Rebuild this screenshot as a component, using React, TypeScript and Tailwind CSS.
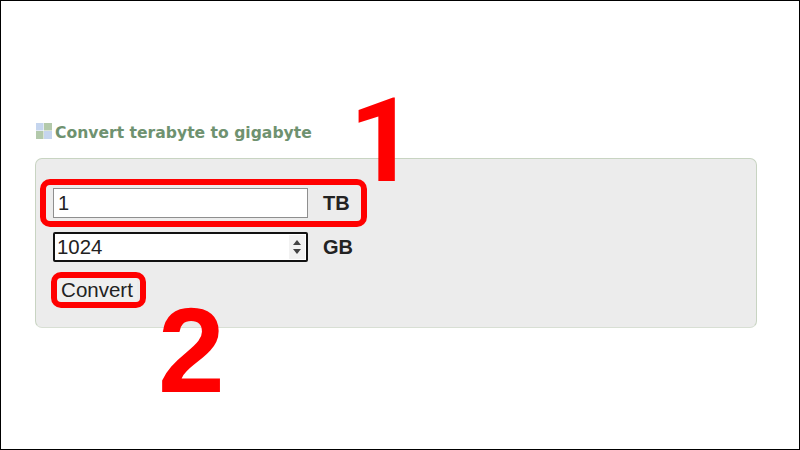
export default function App() {
  return (
    <div className="relative h-[450px] w-[800px] overflow-hidden border border-black bg-white font-['Liberation_Sans',sans-serif] text-[#222]">
      <div className="pl-[34px] pt-[121px] pr-[42px]">
        {/* Heading */}
        <div className="flex h-[20px] items-center gap-[3px]">
          <svg width="16" height="16" viewBox="0 0 16 16" className="mb-[2px] ml-[1px] shrink-0">
            <rect x="0" y="0" width="7.5" height="7.5" fill="#c5d5ee" />
            <rect x="8" y="0" width="8" height="7.5" fill="#b3c9ab" />
            <rect x="0" y="8" width="7.5" height="8" fill="#b3c9ab" />
            <rect x="8" y="8" width="8" height="8" fill="#c5d5ee" />
          </svg>
          <h1 className="mt-[4px] font-['DejaVu_Sans',sans-serif] text-[15.6px] font-bold whitespace-nowrap text-[#6f9270]">
            Convert terabyte to gigabyte
          </h1>
        </div>

        {/* Converter panel */}
        <div className="mt-[16px] h-[170px] rounded-[7px] border border-[#c8d4c2] border-b-[#d8dfd4] bg-[#ececec] pl-[17px] pt-[29px]">
          <div className="flex items-center">
            <input
              readOnly
              value="1"
              className="h-[30px] w-[255px] border border-[#8f8f8f] bg-white pl-[4px] text-[20px] text-[#222] outline-none"
            />
            <span className="ml-[15px] text-[20px] font-bold">TB</span>
          </div>

          <div className="mt-[14px] flex items-center">
            <div className="flex h-[30px] w-[255px] items-center justify-between rounded-[2px] border-2 border-[#111] bg-white pl-[2px]">
              <span className="text-[20.4px]">1024</span>
              <div className="mr-[1px] flex h-[24px] w-[16px] flex-col items-center justify-center gap-[4px] bg-[#f2f2f2]">
                <svg width="8" height="5" viewBox="0 0 8 5">
                  <path d="M4 0 L8 5 L0 5 Z" fill="#444" />
                </svg>
                <svg width="8" height="5" viewBox="0 0 8 5">
                  <path d="M0 0 L8 0 L4 5 Z" fill="#444" />
                </svg>
              </div>
            </div>
            <span className="ml-[15px] text-[20px] font-bold">GB</span>
          </div>

          <button className="mt-[16px] ml-[4px] block h-[24px] w-[80px] bg-[#efefef] text-center text-[20.5px] leading-[24px] text-[#222]">
            Convert
          </button>
        </div>
      </div>

      {/* Red annotations */}
      <div className="absolute left-[39px] top-[178px] h-[48px] w-[327px] rounded-[10px] border-[6px] border-[#ff0000]" />
      <div className="absolute left-[50px] top-[271px] h-[36px] w-[95px] rounded-[10px] border-[6px] border-[#ff0000]" />
      <div className="absolute left-[348px] top-[71px] font-['Roboto',sans-serif] text-[117px] leading-[138px] font-bold text-[#ff0000]">1</div>
      <div className="absolute left-[157px] top-[280px] text-[120px] leading-[138px] font-bold text-[#ff0000]">2</div>
    </div>
  );
}
